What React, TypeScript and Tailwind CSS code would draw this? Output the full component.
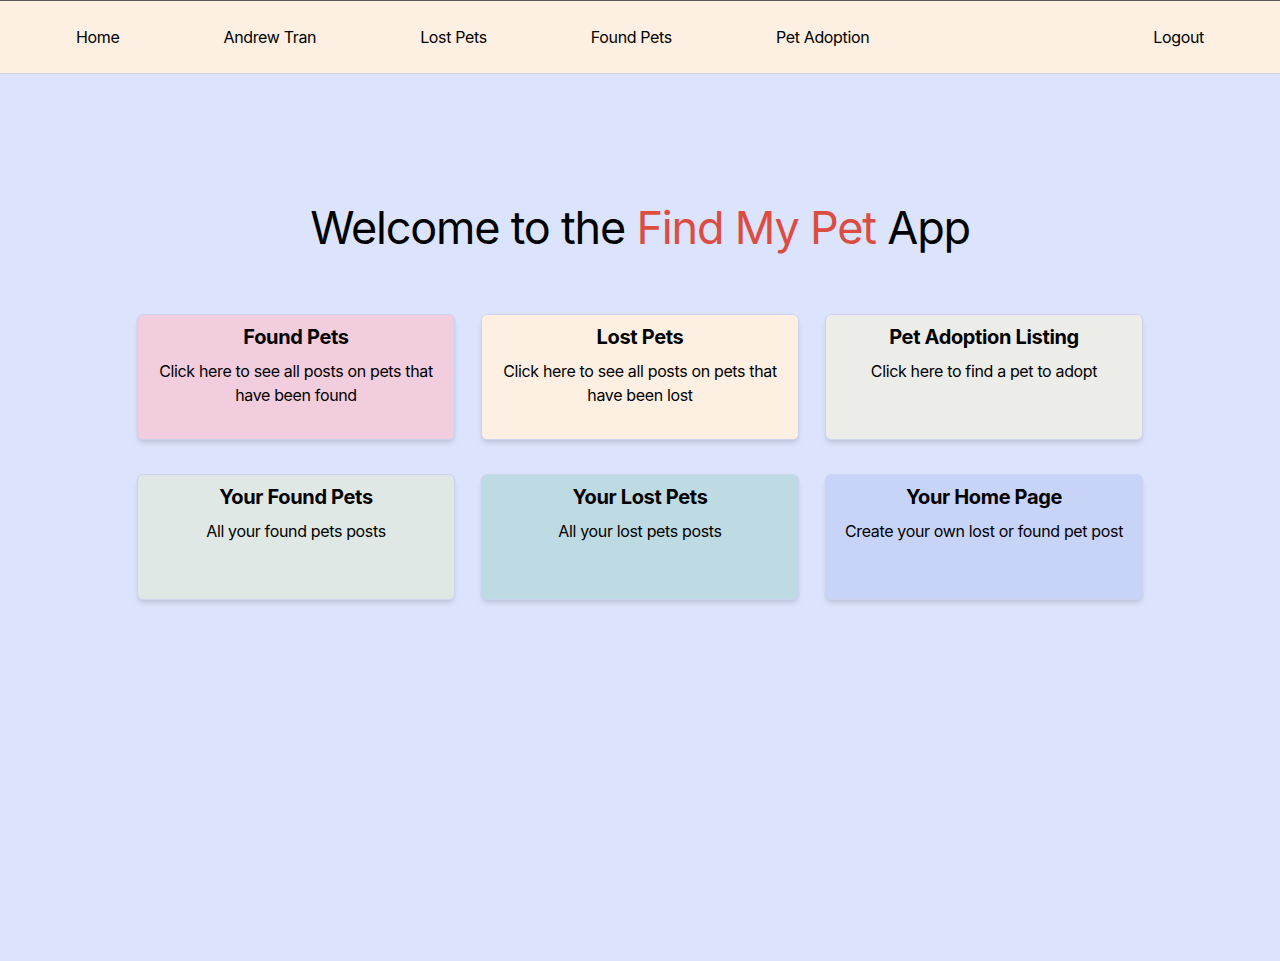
import React from 'react';

interface Card {
  title: string;
  text: string;
  bg: string;
}

const links = ['Home', 'Andrew Tran', 'Lost Pets', 'Found Pets', 'Pet Adoption'];

const cards: Card[] = [
  { title: 'Found Pets', text: 'Click here to see all posts on pets that have been found', bg: 'bg-[#f2cddd]' },
  { title: 'Lost Pets', text: 'Click here to see all posts on pets that have been lost', bg: 'bg-[#fdf0e2]' },
  { title: 'Pet Adoption Listing', text: 'Click here to find a pet to adopt', bg: 'bg-[#ecede8]' },
  { title: 'Your Found Pets', text: 'All your found pets posts', bg: 'bg-[#dfe8e5]' },
  { title: 'Your Lost Pets', text: 'All your lost pets posts', bg: 'bg-[#bedae2]' },
  { title: 'Your Home Page', text: 'Create your own lost or found pet post', bg: 'bg-[#c8d3f8]' },
];

const App: React.FC = () => {
  return (
    <div className="min-h-[961px] bg-[#dce3fc] font-['Inter','Liberation_Sans',sans-serif] text-black tracking-[-0.35px]">
      <nav className="h-[74px] bg-[#fdf0e2] border-t border-t-[#5a5a5f] border-b border-b-[#cfd3dc] flex items-center px-6">
        {links.map((l) => (
          <a key={l} href="#" className="px-[52px] text-base">
            {l}
          </a>
        ))}
        <a href="#" className="ml-auto px-[52px] text-base">
          Logout
        </a>
      </nav>

      <main className="pt-[131px]">
        <h1 className="text-center text-[45px] leading-[46px] tracking-[-1.2px]">
          Welcome to the <span className="text-[#dd4c40]">Find My Pet</span> App
        </h1>

        <div className="w-[1006px] mx-auto mt-[63px] grid grid-cols-3 gap-x-[26px] gap-y-[34px]">
          {cards.map((c) => (
            <a
              key={c.title}
              href="#"
              className={`${c.bg} h-[126px] rounded-md border border-[#cdd3f0] shadow-md px-4 pt-2 text-center block`}
            >
              <h3 className="text-xl font-bold leading-7">{c.title}</h3>
              <p className="mt-2 text-base leading-6">{c.text}</p>
            </a>
          ))}
        </div>
      </main>
    </div>
  );
};

export default App;
